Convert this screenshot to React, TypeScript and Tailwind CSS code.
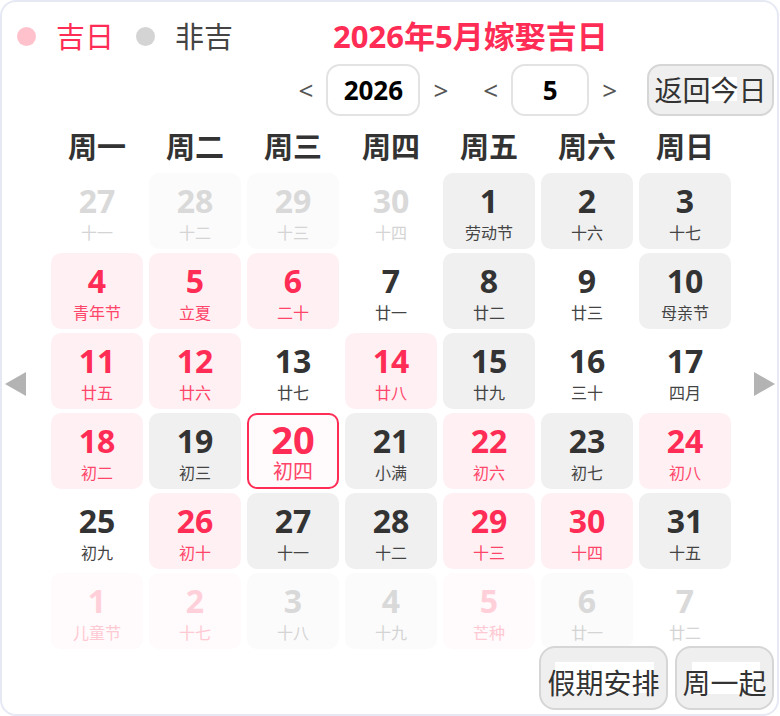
import React from "react";

type Kind = "fade" | "fadeGray" | "fadePink" | "pink" | "gray" | "none" | "today";
type Cell = { d: number; l: string; k: Kind };

const rows: Cell[][] = [
  [
    { d: 27, l: "十一", k: "fade" },
    { d: 28, l: "十二", k: "fadeGray" },
    { d: 29, l: "十三", k: "fadeGray" },
    { d: 30, l: "十四", k: "fade" },
    { d: 1, l: "劳动节", k: "gray" },
    { d: 2, l: "十六", k: "gray" },
    { d: 3, l: "十七", k: "gray" },
  ],
  [
    { d: 4, l: "青年节", k: "pink" },
    { d: 5, l: "立夏", k: "pink" },
    { d: 6, l: "二十", k: "pink" },
    { d: 7, l: "廿一", k: "none" },
    { d: 8, l: "廿二", k: "gray" },
    { d: 9, l: "廿三", k: "none" },
    { d: 10, l: "母亲节", k: "gray" },
  ],
  [
    { d: 11, l: "廿五", k: "pink" },
    { d: 12, l: "廿六", k: "pink" },
    { d: 13, l: "廿七", k: "none" },
    { d: 14, l: "廿八", k: "pink" },
    { d: 15, l: "廿九", k: "gray" },
    { d: 16, l: "三十", k: "none" },
    { d: 17, l: "四月", k: "none" },
  ],
  [
    { d: 18, l: "初二", k: "pink" },
    { d: 19, l: "初三", k: "gray" },
    { d: 20, l: "初四", k: "today" },
    { d: 21, l: "小满", k: "gray" },
    { d: 22, l: "初六", k: "pink" },
    { d: 23, l: "初七", k: "gray" },
    { d: 24, l: "初八", k: "pink" },
  ],
  [
    { d: 25, l: "初九", k: "none" },
    { d: 26, l: "初十", k: "pink" },
    { d: 27, l: "十一", k: "gray" },
    { d: 28, l: "十二", k: "gray" },
    { d: 29, l: "十三", k: "pink" },
    { d: 30, l: "十四", k: "pink" },
    { d: 31, l: "十五", k: "gray" },
  ],
  [
    { d: 1, l: "儿童节", k: "fadePink" },
    { d: 2, l: "十七", k: "fadePink" },
    { d: 3, l: "十八", k: "fadeGray" },
    { d: 4, l: "十九", k: "fadeGray" },
    { d: 5, l: "芒种", k: "fadePink" },
    { d: 6, l: "廿一", k: "fadeGray" },
    { d: 7, l: "廿二", k: "fade" },
  ],
];

const boxCls: Record<Kind, string> = {
  fade: "",
  fadeGray: "bg-[#fbfbfb]",
  fadePink: "bg-[#fffafb]",
  pink: "bg-[#fff0f3]",
  gray: "bg-[#f0f0f0]",
  none: "",
  today: "bg-[#fffafb] border-2 border-[#ff2d55]",
};
const numCls: Record<Kind, string> = {
  fade: "text-[#d9d9d9]",
  fadeGray: "text-[#d9d9d9]",
  fadePink: "text-[#ffd0d9]",
  pink: "text-[#ff2d55]",
  gray: "text-[#333333]",
  none: "text-[#333333]",
  today: "text-[#ff2d55]",
};
const lunCls: Record<Kind, string> = {
  fade: "text-[#d4d4d4]",
  fadeGray: "text-[#d4d4d4]",
  fadePink: "text-[#ffc9d3]",
  pink: "text-[#ff4569]",
  gray: "text-[#444444]",
  none: "text-[#444444]",
  today: "text-[#ff4569]",
};

const font = { fontFamily: '"Noto Sans", "Noto Sans CJK SC", sans-serif' };

function DayCell({ c }: { c: Cell }) {
  if (c.k === "today") {
    return (
      <div className={`h-[76px] rounded-[10px] flex flex-col items-center pt-[5px] ${boxCls[c.k]}`}>
        <div className={`font-bold leading-[38px] text-[38px] ${numCls[c.k]}`}>{c.d}</div>
        <div className={`mt-[4px] leading-[20px] text-[20px] ${lunCls[c.k]}`}>{c.l}</div>
      </div>
    );
  }
  return (
    <div className={`h-[76px] rounded-[10px] flex flex-col items-center pt-[11px] ${boxCls[c.k]}`}>
      <div className={`font-bold leading-[34px] text-[32px] ${numCls[c.k]}`}>{c.d}</div>
      <div className={`mt-[5px] leading-[20px] text-[16px] ${lunCls[c.k]}`}>{c.l}</div>
    </div>
  );
}

export default function App() {
  const weeks = ["周一", "周二", "周三", "周四", "周五", "周六", "周日"];
  return (
    <div style={font} className="w-[780px] h-[716px] bg-white">
      <div className="w-[779px] h-[716px] border-2 border-[#e6e9f4] rounded-[16px] flex flex-col pt-[8px]">
        {/* legend + title */}
        <div className="h-[52px] flex items-center pl-[15px]">
          <span className="w-[19px] h-[19px] rounded-full bg-[#ffc2cd]" />
          <span className="ml-[20px] text-[29px] text-[#ff2d55] leading-none">吉日</span>
          <span className="ml-[22px] w-[19px] h-[19px] rounded-full bg-[#d4d4d4]" />
          <span className="ml-[20px] text-[29px] text-[#444444] leading-none">非吉</span>
          <span className="ml-[100px] text-[31px] font-bold text-[#ff2d55] leading-none">2026年5月嫁娶吉日</span>
        </div>
        {/* controls */}
        <div className="mt-[2px] h-[52px] flex items-center justify-end pr-[3px]">
          <span className="text-[26px] text-[#555555]">&lt;</span>
          <div className="ml-[13px] w-[94px] h-[52px] rounded-[14px] border-2 border-[#e3e3e3] flex items-center justify-center text-[26px] font-bold text-black">
            2026
          </div>
          <span className="ml-[13px] text-[26px] text-[#555555]">&gt;</span>
          <span className="ml-[35px] text-[26px] text-[#555555]">&lt;</span>
          <div className="ml-[13px] w-[78px] h-[52px] rounded-[14px] border-2 border-[#e3e3e3] flex items-center justify-center text-[26px] font-bold text-black">
            5
          </div>
          <span className="ml-[13px] text-[26px] text-[#555555]">&gt;</span>
          <button className="relative ml-[30px] w-[127px] h-[52px] rounded-[14px] border-2 border-[#d6d6d6] bg-[#efefef] flex items-center justify-center">
            <span className="absolute left-[60px] top-[11px] w-[28px] h-[24px] bg-white" />
            <span className="relative text-[28px] text-[#333333] leading-none">返回今日</span>
          </button>
        </div>
        {/* calendar */}
        <div className="mt-[3px] flex items-center pl-[3px]">
          <svg width="21" height="24" viewBox="0 0 21 24" className="shrink-0">
            <polygon points="0,12 21,0 21,24" fill="#b3b3b3" />
          </svg>
          <div className="ml-[25px] w-[680px]">
            <div className="grid grid-cols-7 gap-x-[6px] h-[54px] items-center">
              {weeks.map((w) => (
                <div key={w} className="text-center text-[29px] font-bold text-[#333333] leading-none">
                  {w}
                </div>
              ))}
            </div>
            <div className="grid grid-cols-7 gap-x-[6px] gap-y-[4px]">
              {rows.flat().map((c, i) => (
                <DayCell key={i} c={c} />
              ))}
            </div>
          </div>
          <svg width="21" height="24" viewBox="0 0 21 24" className="shrink-0 ml-[23px]">
            <polygon points="21,12 0,0 0,24" fill="#b3b3b3" />
          </svg>
        </div>
        {/* bottom buttons */}
        <div className="mt-[-3px] flex justify-end gap-[7px] pr-[3px]">
          <button className="relative w-[129px] h-[64px] rounded-[16px] border-2 border-[#d6d6d6] bg-[#efefef] flex items-center justify-center">
            <span className="absolute left-[14px] top-[14px] w-[99px] h-[31px] bg-white" />
            <span className="relative text-[28px] text-[#333333] leading-none mt-[10px]">假期安排</span>
          </button>
          <button className="relative w-[99px] h-[64px] rounded-[16px] border-2 border-[#d6d6d6] bg-[#efefef] flex items-center justify-center">
            <span className="absolute left-[15px] top-[14px] w-[68px] h-[32px] bg-white" />
            <span className="relative text-[28px] text-[#333333] leading-none mt-[10px]">周一起</span>
          </button>
        </div>
      </div>
    </div>
  );
}
